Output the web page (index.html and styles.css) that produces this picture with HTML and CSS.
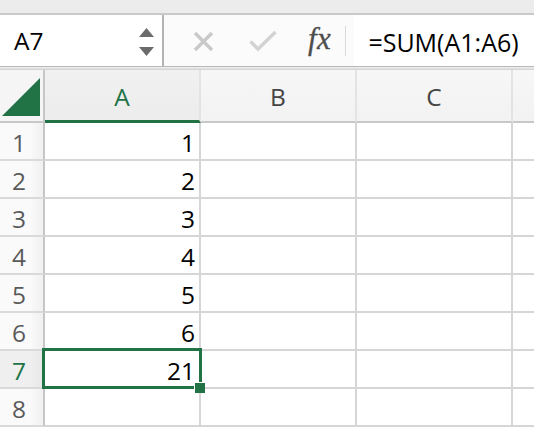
FILE: index.html
```html
<!DOCTYPE html>
<html>
<head>
<meta charset="utf-8">
<link rel="stylesheet" href="styles.css">
</head>
<body>
<div class="topstrip"></div>
<div class="fbar">
  <div class="namebox">
    <span class="ref">A7</span>
    <span class="spin">
      <svg width="15" height="9" viewBox="0 0 15 9"><polygon points="7.5,0 15,9 0,9" fill="#6b6b6b"/></svg>
      <svg width="15" height="9" viewBox="0 0 15 9"><polygon points="0,0 15,0 7.5,9" fill="#6b6b6b"/></svg>
    </span>
  </div>
  <div class="fsection">
    <svg class="icon-x" width="21" height="21" viewBox="0 0 21 21"><path d="M2 2 L19 19 M19 2 L2 19" stroke="#c9c9c9" stroke-width="3.4" fill="none"/></svg>
    <svg class="icon-check" width="28" height="22" viewBox="0 0 28 22"><path d="M1.5 11.5 L9 19 L26.5 2" stroke="#d3d3d3" stroke-width="3.4" fill="none"/></svg>
    <span class="fx">fx</span>
    <span class="sep"></span>
    <span class="formula">=SUM(A1:A6)</span>
  </div>
</div>
<div class="fbar-under"></div>
<div class="sheet">
  <div class="corner"><svg width="40" height="40" viewBox="0 0 40 40"><polygon points="38,0 38,38 0,38" fill="#217346"/></svg></div>
  <div class="colhead sel">A</div>
  <div class="colhead">B</div>
  <div class="colhead">C</div>
  <div class="colhead last"></div>

  <div class="rowhead">1</div><div class="cell">1</div><div class="cell"></div><div class="cell"></div><div class="cell last"></div>
  <div class="rowhead">2</div><div class="cell">2</div><div class="cell"></div><div class="cell"></div><div class="cell last"></div>
  <div class="rowhead">3</div><div class="cell">3</div><div class="cell"></div><div class="cell"></div><div class="cell last"></div>
  <div class="rowhead">4</div><div class="cell">4</div><div class="cell"></div><div class="cell"></div><div class="cell last"></div>
  <div class="rowhead">5</div><div class="cell">5</div><div class="cell"></div><div class="cell"></div><div class="cell last"></div>
  <div class="rowhead">6</div><div class="cell">6</div><div class="cell"></div><div class="cell"></div><div class="cell last"></div>
  <div class="rowhead sel">7</div><div class="cell active">21<span class="handle"></span></div><div class="cell"></div><div class="cell"></div><div class="cell last"></div>
  <div class="rowhead">8</div><div class="cell"></div><div class="cell"></div><div class="cell"></div><div class="cell last"></div>
</div>
</body>
</html>
```

FILE: styles.css
```css
html, body {
  margin: 0;
  padding: 0;
}
body {
  width: 534px;
  height: 430px;
  overflow: hidden;
  background: #ffffff;
  font-family: "Open Sans", Lato, sans-serif;
  color: #000;
}
.topstrip {
  height: 13px;
  background: #ececec;
  border-bottom: 2px solid #c9c9c9;
}
.fbar {
  display: flex;
  height: 51px;
  border-bottom: 1px solid #b9b9b9;
  background: #ffffff;
}
.fbar-under {
  height: 3px;
  background: linear-gradient(#f2f2f2, #cfcfcf);
}
.namebox {
  box-sizing: border-box;
  width: 164px;
  border-right: 2px solid #b3b3b3;
  display: flex;
  align-items: center;
  padding-left: 14px;
  padding-right: 8px;
}
.ref {
  flex: 1;
  font-size: 24.5px;
  line-height: 30px;
  padding-top: 1px;
}
.spin {
  display: flex;
  flex-direction: column;
  gap: 10px;
  padding-top: 2px;
}
.spin svg {
  display: block;
}
.fsection {
  flex: 1;
  display: flex;
  align-items: center;
  background: #fbfbfb;
}
.icon-x {
  margin-left: 29px;
  margin-top: 2px;
}
.icon-check {
  margin-left: 35px;
  margin-top: 0;
}
.fx {
  margin-left: 31px;
  font-family: "Liberation Serif", "DejaVu Serif", serif;
  font-style: italic;
  font-size: 31px;
  line-height: 34px;
  color: #4d4d4d;
  -webkit-text-stroke: 0.3px #4d4d4d;
  letter-spacing: 0.5px;
  padding-bottom: 3px;
}
.sep {
  width: 1px;
  height: 30px;
  background: #d9d9d9;
  margin-left: 14px;
}
.formula {
  flex: 1;
  align-self: stretch;
  display: flex;
  align-items: center;
  background: #ffffff;
  margin-left: 8px;
  padding-left: 14px;
  font-size: 25px;
  padding-top: 2px;
}
.sheet {
  display: grid;
  grid-template-columns: 45px 156px 156px 156px 1fr;
  grid-template-rows: 53px repeat(8, 38px);
}
.sheet > div {
  box-sizing: border-box;
  border-right: 2px solid #d6d6d6;
  border-bottom: 2px solid #d6d6d6;
  line-height: 30px;
}
.sheet > .last {
  border-right: none;
}
.corner {
  background: #f5f5f5;
  border-right-color: #c6c6c6 !important;
  border-bottom-color: #c8c8c8 !important;
  display: flex;
  align-items: flex-end;
  padding: 0 0 3px 2px;
}
.corner svg {
  display: block;
}
.colhead {
  background: linear-gradient(#f7f7f7, #f2f2f2);
  border-right-color: #e3e3e3 !important;
  border-bottom-color: #c8c8c8 !important;
  display: flex;
  align-items: center;
  justify-content: center;
  font-size: 24.5px;
  color: #444444;
  padding-top: 2px;
}
.colhead.sel {
  background: linear-gradient(#f1f1f1, #ececec);
  color: #217346;
  border-bottom: 3px solid #217346 !important;
  padding-top: 3px;
}
.rowhead {
  background: linear-gradient(90deg, #fafafa 70%, #f0f0f0);
  border-right-color: #c6c6c6 !important;
  border-bottom-color: #dadada !important;
  display: flex;
  align-items: center;
  padding-left: 12px;
  padding-top: 3px;
  font-size: 24.5px;
  color: #5a5a5a;
}
.rowhead.sel {
  background: linear-gradient(90deg, #efefef 70%, #e8e8e8);
  color: #217346;
}
.cell {
  display: flex;
  align-items: center;
  justify-content: flex-end;
  padding-right: 4px;
  padding-top: 3px;
  font-size: 24.5px;
  color: #000;
}
.cell.active {
  position: relative;
  z-index: 2;
}
.cell.active::after {
  content: "";
  position: absolute;
  left: -3px;
  top: -3px;
  right: -3px;
  bottom: -2px;
  border: 3px solid #217346;
  box-sizing: border-box;
}
.handle {
  position: absolute;
  right: -6px;
  bottom: -6px;
  width: 10px;
  height: 10px;
  background: #217346;
  border-left: 1px solid #fff;
  border-top: 1px solid #fff;
  z-index: 3;
}
```
